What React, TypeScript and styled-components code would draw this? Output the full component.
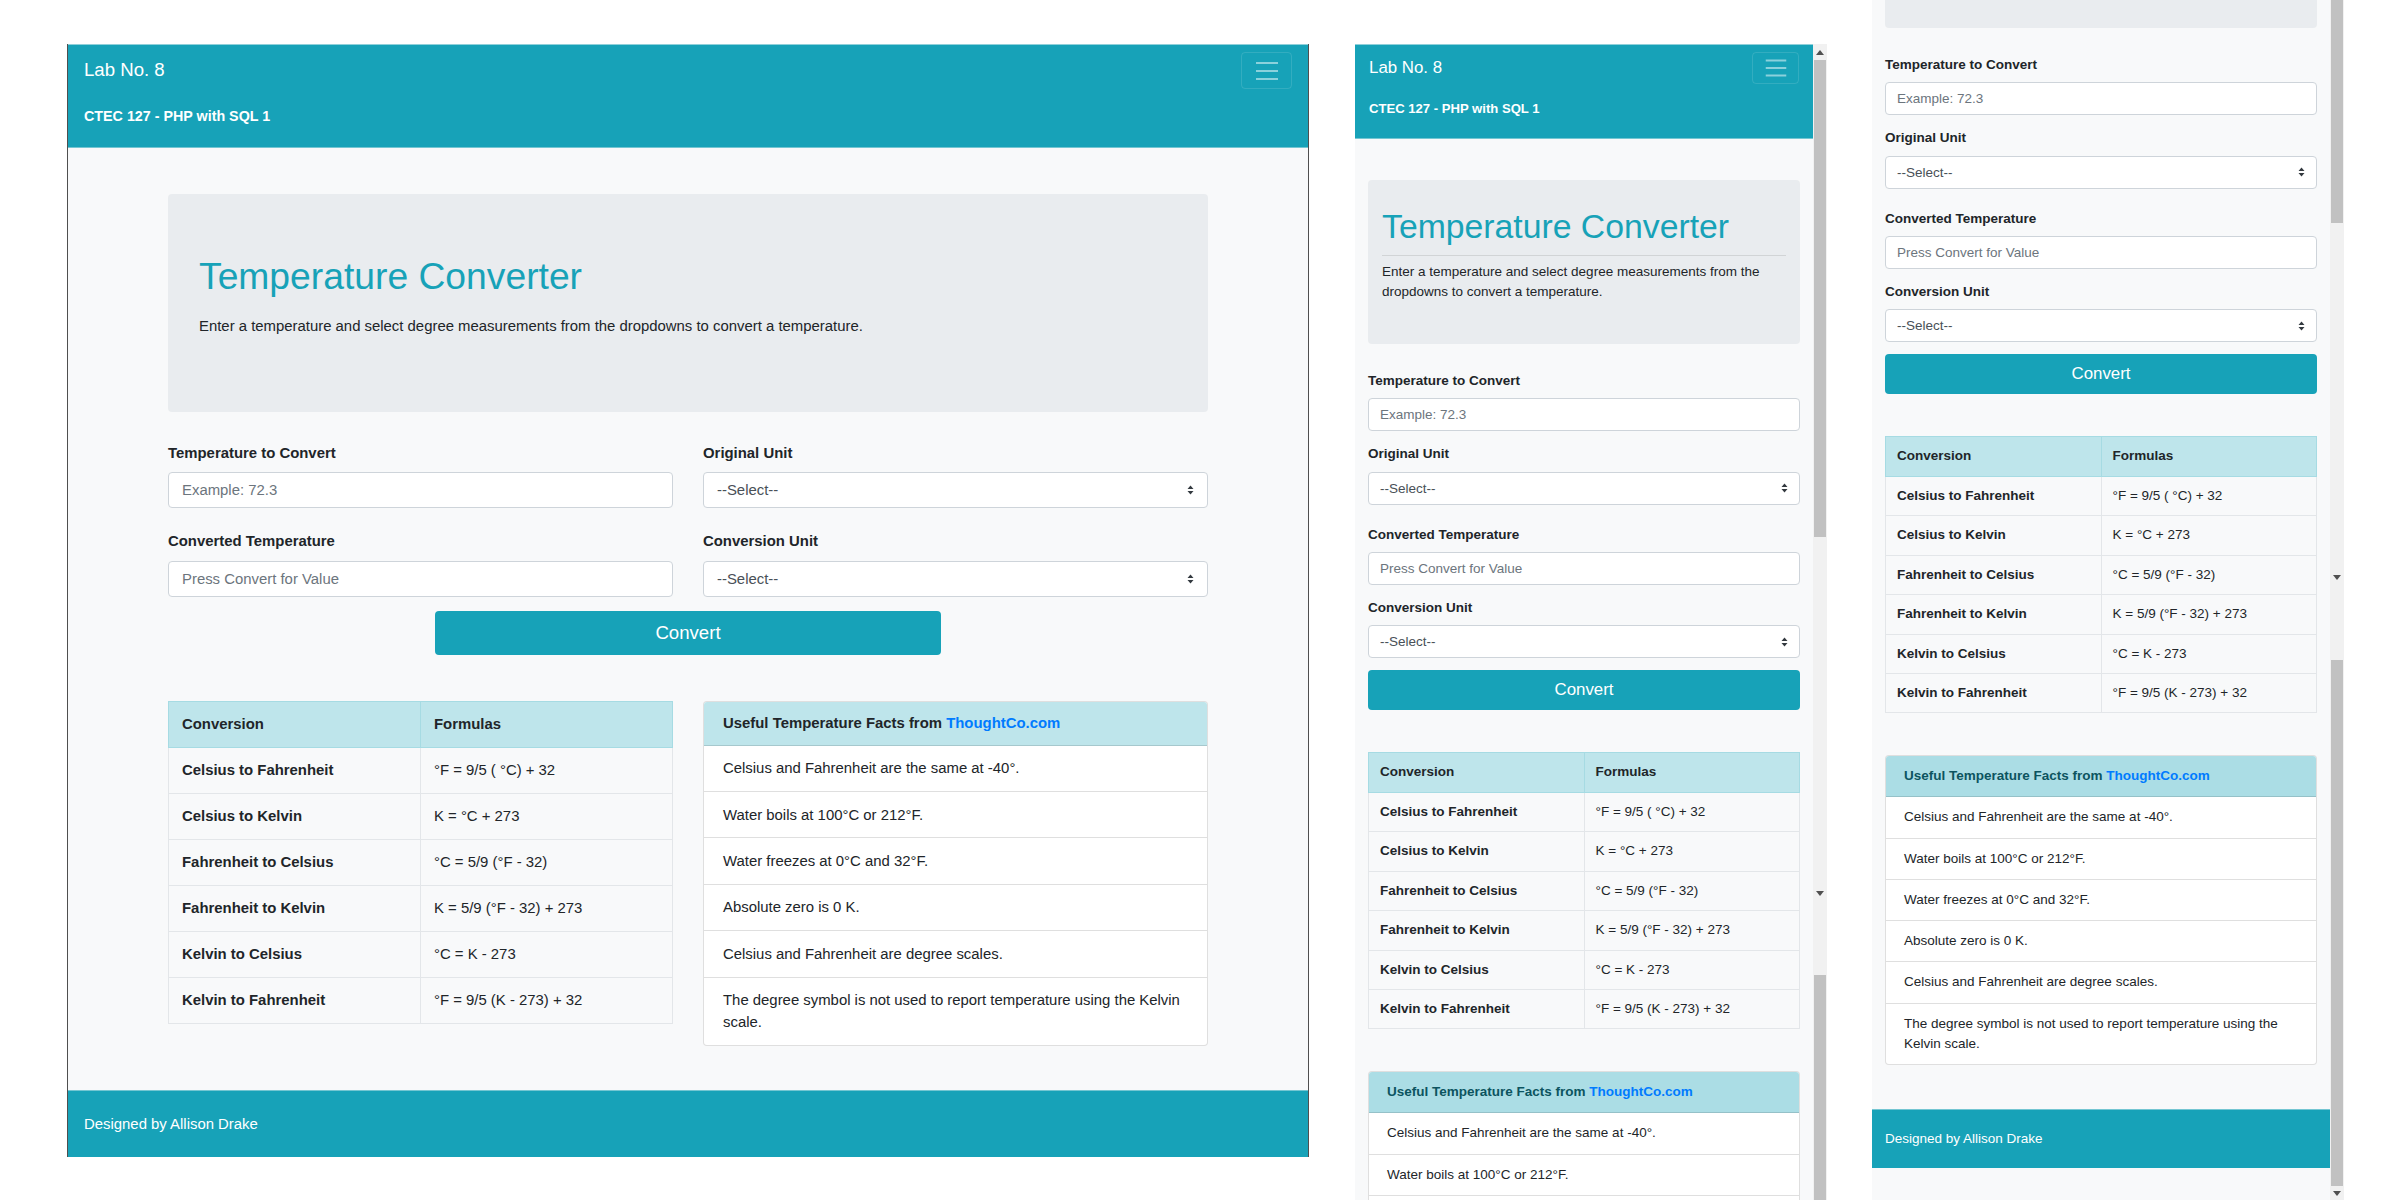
import React, { useLayoutEffect, useRef } from 'react';
import styled, { createGlobalStyle } from 'styled-components';

const TEAL = '#17a2b8';
const FONT = '"Liberation Sans", Arial, Helvetica, sans-serif';

const GlobalStyle = createGlobalStyle`
  html, body { margin: 0; padding: 0; background: #ffffff; }
  body { font-family: ${FONT}; overflow: hidden; }
  * { box-sizing: border-box; }
`;

type W = { $wide: boolean };

const Canvas = styled.div`
  display: flex;
  align-items: flex-start;
  width: 2400px;
  height: 1200px;
  overflow: hidden;
  padding-left: 67px;
  background: #ffffff;
`;

const WideWindow = styled.div`
  flex: none;
  margin-top: 44px;
  width: 1242px;
  height: 1113px;
  border-left: 1px solid #4f4f4f;
  border-right: 1px solid #4f4f4f;
  overflow: hidden;
  display: flex;
  flex-direction: column;
`;

const NarrowWindow = styled.div<{ $ml: number; $mt: number; $h: number }>`
  flex: none;
  display: flex;
  width: 472px;
  margin-left: ${(p) => p.$ml}px;
  margin-top: ${(p) => p.$mt}px;
  height: ${(p) => p.$h}px;
`;

const Viewport = styled.div`
  width: 458px;
  height: 100%;
  overflow: hidden;
  background: #f8f9fa;
`;

const Site = styled.div<W>`
  display: flex;
  flex-direction: column;
  min-height: 100%;
  background: #f8f9fa;
  color: #212529;
  font-family: ${FONT};
  font-size: ${(p) => (p.$wide ? '14.9px' : '13.5px')};
  line-height: 1.5;
  padding-bottom: ${(p) => (p.$wide ? '0' : '40px')};
  flex: 1;
`;

const NavBar = styled.header<W>`
  flex: none;
  background: ${TEAL};
  color: #ffffff;
  border-top: 1px solid #8fd0da;
  border-bottom: 1px solid #74c6d2;
  padding: ${(p) => (p.$wide ? '7px 16px 20px' : '7px 14px 19px')};
`;

const NavTop = styled.div`
  display: flex;
  align-items: center;
  justify-content: space-between;
`;

const Brand = styled.div`
  font-size: 1.25em;
  line-height: 1.2;
`;

const Toggler = styled.div<W>`
  display: flex;
  align-items: center;
  justify-content: center;
  width: ${(p) => (p.$wide ? '51px' : '47px')};
  height: ${(p) => (p.$wide ? '37px' : '32px')};
  border: 1px solid rgba(255, 255, 255, 0.12);
  border-radius: 4px;
`;

const Subtitle = styled.div<W>`
  margin-top: ${(p) => (p.$wide ? '16px' : '15px')};
  font-weight: bold;
  font-size: ${(p) => (p.$wide ? '14.3px' : '13.1px')};
  line-height: ${(p) => (p.$wide ? '22px' : '20px')};
`;

const Main = styled.main<W>`
  flex: 1;
  padding: ${(p) => (p.$wide ? '46px 0 40px' : '41px 0 44px')};
`;

const Container = styled.div<W>`
  width: ${(p) => (p.$wide ? '1040px' : '432px')};
  margin: 0 auto;
`;

const Jumbotron = styled.section<W>`
  background: #e9ecef;
  border-radius: 4px;
  padding: ${(p) => (p.$wide ? '60px 31px 59px' : '26px 14px 26px')};
`;

const Title = styled.h1<W>`
  margin: 0 0 ${(p) => (p.$wide ? '16px' : '0')};
  font-size: 2.5em;
  font-weight: 400;
  line-height: 1.2;
  color: ${TEAL};
`;

const Rule = styled.hr`
  border: 0;
  border-top: 1px solid rgba(0, 0, 0, 0.1);
  margin: 8px 0 6px;
`;

const Lead = styled.p`
  margin: 0 0 16px;
  font-size: 1em;
  line-height: 1.5;
`;

const Form = styled.form<W>`
  display: flex;
  flex-direction: column;
  gap: ${(p) => (p.$wide ? '22px' : '20px')};
  margin-top: ${(p) => (p.$wide ? '30px' : '27px')};
`;

const FormRow = styled.div<W>`
  display: ${(p) => (p.$wide ? 'grid' : 'flex')};
  grid-template-columns: 1fr 1fr;
  flex-direction: column;
  gap: ${(p) => (p.$wide ? '30px' : '13px')};
`;

const Field = styled.div`
  display: flex;
  flex-direction: column;
`;

const Label = styled.label<W>`
  font-weight: bold;
  line-height: 1.5;
  margin-bottom: ${(p) => (p.$wide ? '8px' : '7px')};
`;

const Input = styled.input<W>`
  display: block;
  width: 100%;
  height: ${(p) => (p.$wide ? '36px' : '33px')};
  padding: 0 ${(p) => (p.$wide ? '13px' : '11px')};
  border: 1px solid #ced4da;
  border-radius: 4px;
  background: #ffffff;
  font-family: ${FONT};
  font-size: 1em;
  color: #495057;
  outline: none;
  &::placeholder { color: #6c757d; opacity: 1; }
`;

const SelectWrap = styled.div`
  position: relative;
`;

const Select = styled.select<W>`
  display: block;
  width: 100%;
  height: ${(p) => (p.$wide ? '36px' : '33px')};
  padding: 0 ${(p) => (p.$wide ? '13px' : '11px')};
  border: 1px solid #ced4da;
  border-radius: 4px;
  background: #ffffff;
  font-family: ${FONT};
  font-size: 1em;
  color: #495057;
  appearance: none;
  -webkit-appearance: none;
  outline: none;
`;

const Caret = styled.svg<W>`
  position: absolute;
  right: ${(p) => (p.$wide ? '14px' : '12px')};
  top: 50%;
  transform: translateY(-50%);
  width: 7px;
  height: 11px;
  pointer-events: none;
`;

const ConvertButton = styled.button<W>`
  display: block;
  margin: ${(p) => (p.$wide ? '14px auto 0' : '12px 0 0')};
  width: ${(p) => (p.$wide ? '506px' : '100%')};
  height: ${(p) => (p.$wide ? '44px' : '40px')};
  border: none;
  border-radius: 4px;
  background: ${TEAL};
  color: #ffffff;
  font-family: ${FONT};
  font-size: 1.25em;
  cursor: pointer;
`;

const InfoGrid = styled.div<W>`
  display: ${(p) => (p.$wide ? 'grid' : 'flex')};
  grid-template-columns: 1fr 1fr;
  flex-direction: column;
  align-items: start;
  gap: ${(p) => (p.$wide ? '30px' : '42px')};
  margin-top: ${(p) => (p.$wide ? '46px' : '42px')};
`;

const Table = styled.table`
  width: 100%;
  border-collapse: collapse;
  table-layout: fixed;
  border: 1px solid #dee2e6;
`;

const Th = styled.th<W>`
  height: ${(p) => (p.$wide ? '46px' : '40px')};
  padding: 0 ${(p) => (p.$wide ? '13px' : '11px')};
  background: #bee5eb;
  border: 1px solid #a6dbe3;
  text-align: left;
  font-weight: bold;
`;

const Td = styled.td<W & { $strong?: boolean }>`
  height: ${(p) => (p.$wide ? '46px' : '39.4px')};
  padding: 0 ${(p) => (p.$wide ? '13px' : '11px')};
  border: 1px solid #e3e6e9;
  font-weight: ${(p) => (p.$strong ? 'bold' : 'normal')};
`;

const Card = styled.section`
  border: 1px solid rgba(0, 0, 0, 0.125);
  border-radius: 4px;
  overflow: hidden;
  background: #ffffff;
`;

const CardHeader = styled.div<W>`
  display: flex;
  align-items: center;
  height: ${(p) => (p.$wide ? '44px' : '41px')};
  padding: 0 ${(p) => (p.$wide ? '19px' : '18px')};
  background: ${(p) => (p.$wide ? '#bee5eb' : '#abdde5')};
  color: ${(p) => (p.$wide ? '#212529' : '#0c5460')};
  border-bottom: 1px solid rgba(0, 0, 0, 0.125);
  font-weight: bold;
  white-space: pre;
`;

const Link = styled.a`
  color: #007bff;
  text-decoration: none;
`;

const FactItem = styled.div<W>`
  padding: ${(p) => (p.$wide ? '11.5px 19px' : '10px 18px')};
  line-height: 1.5;
  & + & { border-top: 1px solid rgba(0, 0, 0, 0.125); }
`;

const Footer = styled.footer<W>`
  flex: none;
  display: flex;
  align-items: center;
  height: ${(p) => (p.$wide ? '67px' : '59px')};
  padding: 0 ${(p) => (p.$wide ? '16px' : '13px')};
  background: ${TEAL};
  color: #ffffff;
  border-top: 1px solid #74c6d2;
`;

const Scrollbar = styled.div`
  flex: none;
  width: 14px;
  height: 100%;
  display: flex;
  flex-direction: column;
  background: #f1f1f1;
`;

const ScrollTrack = styled.div<{ $h: number }>`
  flex: none;
  height: ${(p) => p.$h}px;
`;

const ScrollThumb = styled.div<{ $h?: number }>`
  flex: ${(p) => (p.$h ? 'none' : '1')};
  height: ${(p) => (p.$h ? `${p.$h}px` : 'auto')};
  margin: 0 1px;
  background: #c1c1c1;
`;

const ScrollArrow = styled.div<{ $h?: number }>`
  flex: none;
  height: ${(p) => p.$h ?? 16}px;
  display: flex;
  align-items: center;
  justify-content: center;
`;

const conversions: [string, string][] = [
  ['Celsius to Fahrenheit', '°F = 9/5 ( °C) + 32'],
  ['Celsius to Kelvin', 'K = °C + 273'],
  ['Fahrenheit to Celsius', '°C = 5/9 (°F - 32)'],
  ['Fahrenheit to Kelvin', 'K = 5/9 (°F - 32) + 273'],
  ['Kelvin to Celsius', '°C = K - 273'],
  ['Kelvin to Fahrenheit', '°F = 9/5 (K - 273) + 32'],
];

const facts = [
  'Celsius and Fahrenheit are the same at -40°.',
  'Water boils at 100°C or 212°F.',
  'Water freezes at 0°C and 32°F.',
  'Absolute zero is 0 K.',
  'Celsius and Fahrenheit are degree scales.',
  'The degree symbol is not used to report temperature using the Kelvin scale.',
];

const MenuIcon: React.FC<{ size: number }> = ({ size }) => (
  <svg width={size} height={size} viewBox="0 0 30 30">
    <path d="M4 7h22M4 15h22M4 23h22" stroke="rgba(255,255,255,0.5)" strokeWidth="2" strokeLinecap="butt" />
  </svg>
);

const Arrow: React.FC<{ up?: boolean }> = ({ up }) => (
  <svg width="8" height="5" viewBox="0 0 8 5">
    <path d={up ? 'M0 5L4 0L8 5Z' : 'M0 0L4 5L8 0Z'} fill="#505050" />
  </svg>
);

const SelectField: React.FC<{ wide: boolean; id: string; label: string }> = ({ wide, id, label }) => (
  <Field>
    <Label $wide={wide} htmlFor={id}>{label}</Label>
    <SelectWrap>
      <Select $wide={wide} id={id} defaultValue="">
        <option value="">--Select--</option>
        <option value="c">Celsius</option>
        <option value="f">Fahrenheit</option>
        <option value="k">Kelvin</option>
      </Select>
      <Caret $wide={wide} viewBox="0 0 7 11">
        <path d="M0.5 4.5L3.5 1L6.5 4.5Z M0.5 6.5L3.5 10L6.5 6.5Z" fill="#343a40" />
      </Caret>
    </SelectWrap>
  </Field>
);

const TextField: React.FC<{ wide: boolean; id: string; label: string; placeholder: string }> = ({ wide, id, label, placeholder }) => (
  <Field>
    <Label $wide={wide} htmlFor={id}>{label}</Label>
    <Input $wide={wide} id={id} placeholder={placeholder} readOnly />
  </Field>
);

const LabPage: React.FC<{ wide: boolean; idp: string }> = ({ wide, idp }) => (
  <Site $wide={wide}>
    <NavBar $wide={wide}>
      <NavTop>
        <Brand>Lab No. 8</Brand>
        <Toggler $wide={wide}>
          <MenuIcon size={wide ? 30 : 28} />
        </Toggler>
      </NavTop>
      <Subtitle $wide={wide}>CTEC 127 - PHP with SQL 1</Subtitle>
    </NavBar>
    <Main $wide={wide}>
      <Container $wide={wide}>
        <Jumbotron $wide={wide}>
          <Title $wide={wide}>Temperature Converter</Title>
          {!wide && <Rule />}
          <Lead>Enter a temperature and select degree measurements from the dropdowns to convert a temperature.</Lead>
        </Jumbotron>
        <Form $wide={wide} onSubmit={(e) => e.preventDefault()}>
          <FormRow $wide={wide}>
            <TextField wide={wide} id={`${idp}-temp`} label="Temperature to Convert" placeholder="Example: 72.3" />
            <SelectField wide={wide} id={`${idp}-orig`} label="Original Unit" />
          </FormRow>
          <FormRow $wide={wide}>
            <TextField wide={wide} id={`${idp}-conv`} label="Converted Temperature" placeholder="Press Convert for Value" />
            <SelectField wide={wide} id={`${idp}-unit`} label="Conversion Unit" />
          </FormRow>
        </Form>
        <ConvertButton $wide={wide} type="button">Convert</ConvertButton>
        <InfoGrid $wide={wide}>
          <Table>
            <thead>
              <tr>
                <Th $wide={wide}>Conversion</Th>
                <Th $wide={wide}>Formulas</Th>
              </tr>
            </thead>
            <tbody>
              {conversions.map(([name, formula]) => (
                <tr key={name}>
                  <Td $wide={wide} $strong>{name}</Td>
                  <Td $wide={wide}>{formula}</Td>
                </tr>
              ))}
            </tbody>
          </Table>
          <Card>
            <CardHeader $wide={wide}>
              Useful Temperature Facts from <Link href="#">ThoughtCo.com</Link>
            </CardHeader>
            {facts.map((f) => (
              <FactItem $wide={wide} key={f}>{f}</FactItem>
            ))}
          </Card>
        </InfoGrid>
      </Container>
    </Main>
    <Footer $wide={wide}>Designed by Allison Drake</Footer>
  </Site>
);

const ScrolledViewport: React.FC<{ offset: number; children: React.ReactNode }> = ({ offset, children }) => {
  const ref = useRef<HTMLDivElement>(null);
  useLayoutEffect(() => {
    if (ref.current) ref.current.scrollTop = offset;
  }, [offset]);
  return <Viewport ref={ref}>{children}</Viewport>;
};

export default function App() {
  return (
    <>
      <GlobalStyle />
      <Canvas>
        <WideWindow>
          <LabPage wide idp="a" />
        </WideWindow>

        <NarrowWindow $ml={46} $mt={44} $h={1156}>
          <ScrolledViewport offset={0}>
            <LabPage wide={false} idp="b" />
          </ScrolledViewport>
          <Scrollbar>
            <ScrollArrow><Arrow up /></ScrollArrow>
            <ScrollThumb $h={477} />
            <ScrollTrack $h={348} />
            <ScrollArrow><Arrow /></ScrollArrow>
            <ScrollTrack $h={74} />
            <ScrollThumb />
          </Scrollbar>
        </NarrowWindow>

        <NarrowWindow $ml={45} $mt={0} $h={1200}>
          <ScrolledViewport offset={272}>
            <LabPage wide={false} idp="c" />
          </ScrolledViewport>
          <Scrollbar>
            <ScrollThumb $h={223} />
            <ScrollTrack $h={346} />
            <ScrollArrow><Arrow /></ScrollArrow>
            <ScrollTrack $h={75} />
            <ScrollThumb />
            <ScrollArrow $h={14}><Arrow /></ScrollArrow>
          </Scrollbar>
        </NarrowWindow>
      </Canvas>
    </>
  );
}
